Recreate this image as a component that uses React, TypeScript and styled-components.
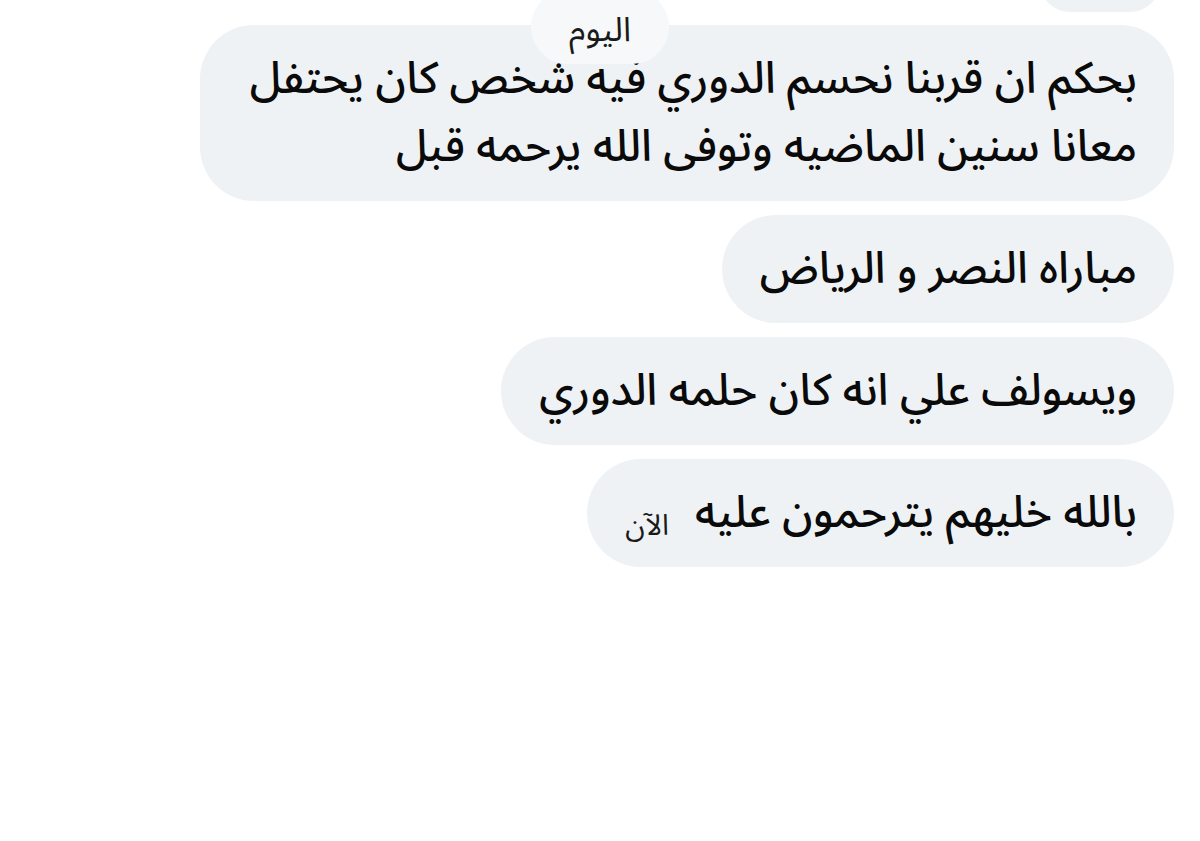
import React from "react";
import styled, { createGlobalStyle } from "styled-components";

const Global = createGlobalStyle`
  html, body { margin: 0; padding: 0; background: #ffffff; }
  body { width: 1200px; height: 841px; overflow: hidden; font-family: "Noto Sans Arabic", "Noto Sans", "DejaVu Sans", sans-serif; }
`;

const Screen = styled.div`
  position: relative;
  width: 1200px;
  height: 841px;
  overflow: hidden;
  background: #ffffff;
`;

const Thread = styled.div`
  display: flex;
  flex-direction: column;
  align-items: flex-end;
  gap: 14px;
  padding-right: 26px;
`;

const Bubble = styled.div<{ $endPad?: number }>`
  direction: rtl;
  background: #eff2f4;
  color: #0a0a0a;
  border-radius: 54px;
  padding: 20px 37px 20px ${(p) => p.$endPad ?? 38}px;
  font-size: 44px;
  font-weight: 500;
  line-height: 68px;
  white-space: nowrap;
  display: flex;
  align-items: baseline;
  gap: 26px;
`;

const PartialBubble = styled.div`
  width: 120px;
  height: 60px;
  margin-top: -48px;
  margin-right: 14px;
  margin-bottom: -1px;
  background: #eff2f4;
  border-radius: 0 0 30px 30px;
`;

const Time = styled.span`
  font-size: 29px;
  font-weight: 400;
  color: #1a1a1a;
  line-height: 1;
  transform: translateY(8px);
`;

const DatePill = styled.div`
  position: absolute;
  top: -10px;
  left: 531px;
  width: 138px;
  height: 74px;
  border-radius: 37px;
  background: #f7f8f9;
  display: flex;
  align-items: center;
  justify-content: center;
  padding-top: 6px;
  box-sizing: border-box;
  direction: rtl;
  font-size: 34px;
  color: #1a1a1a;
`;

export default function App() {
  return (
    <>
      <Global />
      <Screen>
        <Thread>
          <PartialBubble />
          <Bubble $endPad={50}>
            <span>
              بحكم ان قربنا نحسم الدوري فيه شخص كان يحتفل
              <br />
              معانا سنين الماضيه وتوفى الله يرحمه قبل
            </span>
          </Bubble>
          <Bubble>مباراه النصر و الرياض</Bubble>
          <Bubble>ويسولف علي انه كان حلمه الدوري</Bubble>
          <Bubble>
            <span>بالله خليهم يترحمون عليه</span>
            <Time>الآن</Time>
          </Bubble>
        </Thread>
        <DatePill>اليوم</DatePill>
      </Screen>
    </>
  );
}
